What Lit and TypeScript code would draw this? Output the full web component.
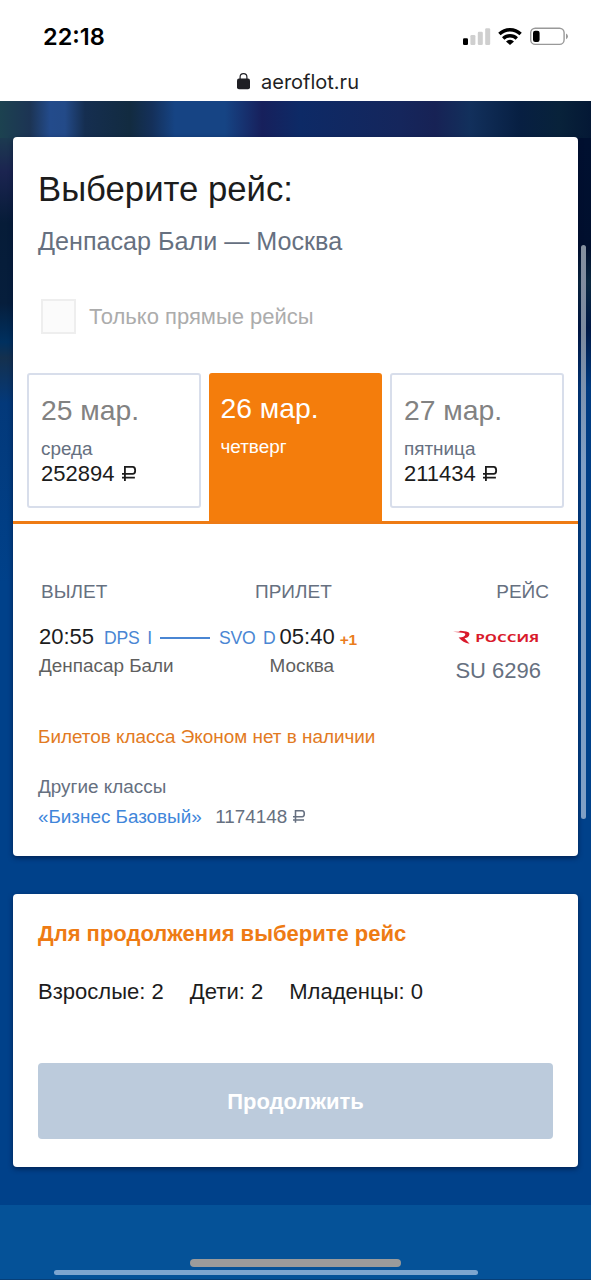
import { LitElement, html, css } from "lit";
import { customElement, property } from "lit/decorators.js";

@customElement("ruble-sign")
class RubleSign extends LitElement {
  static styles = css`
    :host { display: inline-block; width: 0.64em; height: 0.68em; }
    svg { display: block; width: 100%; height: 100%; overflow: visible; }
  `;
  render() {
    return html`<svg viewBox="0 0 14 15" preserveAspectRatio="none" fill="none" stroke="currentColor" stroke-width="1.8">
      <path d="M2.9 15V.9H10.6C12.5.9 13.1 1.8 13.1 4.4S12.5 7.9 10.6 7.9H0M0 11.7H12.8" />
    </svg>`;
  }
}

@customElement("status-bar")
class StatusBar extends LitElement {
  static styles = css`
    :host { display: block; height: 101px; background: #fff; color: #000; }
    .top { display: flex; justify-content: space-between; align-items: flex-start; height: 68px; padding: 23px 23px 0 43px; box-sizing: border-box; }
    .time { font: 600 23.5px/28px Inter, sans-serif; }
    .icons { display: block; margin-top: 4px; }
    .url { display: flex; justify-content: center; align-items: flex-start; gap: 11px; height: 33px; padding-left: 5px; font: 400 20px/26px Inter, sans-serif; color: #1f1f24; }
    .url span { margin-top: 1px; }
    .lock { display: block; margin-top: 5px; }
  `;
  render() {
    return html`
      <div class="top">
        <span class="time">22:18</span>
        <svg class="icons" width="106" height="20" viewBox="462 27 106 20">
          <rect x="463" y="38.2" width="5" height="6.8" rx="1.2" />
          <g fill="#cfcfcf">
            <rect x="470.4" y="35" width="5" height="10" rx="1.2" />
            <rect x="477.8" y="31.8" width="5" height="13.2" rx="1.2" />
            <rect x="485.2" y="28.2" width="5" height="16.8" rx="1.2" />
          </g>
          <g fill="none" stroke="#000" stroke-width="3.4">
            <path d="M499.4 34a15.2 15.2 0 0 1 21.2 0" />
            <path d="M503.2 38.5a9.8 9.8 0 0 1 13.6 0" />
          </g>
          <path d="M506 41.4a6 6 0 0 1 8 0L510 45Z" />
          <rect x="530.7" y="28.2" width="33.4" height="16.2" rx="4.6" fill="#fff" stroke="#999" stroke-width="1.4" />
          <rect x="533" y="30.8" width="6.6" height="11.2" rx="2.2" />
          <path d="M566 33.6q2 1 2 2.8t-2 2.8Z" fill="#999" />
        </svg>
      </div>
      <div class="url">
        <svg class="lock" width="13" height="17" viewBox="0 0 13 17">
          <rect y="5.6" width="13" height="10.6" rx="2" fill="#1f1f24" />
          <path d="M3.1 7V4.1a3.4 3.4 0 0 1 6.8 0V7" fill="none" stroke="#1f1f24" stroke-width="1.2" />
        </svg>
        <span>aeroflot.ru</span>
      </div>`;
  }
}

@customElement("date-tab")
class DateTab extends LitElement {
  @property() date = "";
  @property() day = "";
  @property() price = "";
  @property({ type: Boolean, reflect: true }) active = false;
  static styles = css`
    :host { display: block; box-sizing: border-box; width: 173.5px; height: 135px; padding: 19px 12px 0; border: 2px solid #d8deeb; border-radius: 3px; background: #fff; color: #1c1c1c; }
    :host([active]) { height: 148px; border: 0; background: #f47d0c; border-radius: 3px 3px 0 0; padding: 19px 12px 0; }
    .date { font-size: 28.3px; line-height: 32px; color: #828282; }
    .day { margin-top: 12px; font-size: 18.9px; line-height: 22px; color: #667080; }
    .price { display: flex; align-items: baseline; gap: 7.5px; font-size: 22px; line-height: 28px; white-space: nowrap; }
    :host([active]) .date, :host([active]) .day { color: #fff; }
  `;
  render() {
    return html`
      <div class="date">${this.date}</div>
      <div class="day">${this.day}</div>
      ${this.price ? html`<div class="price">${this.price}<ruble-sign></ruble-sign></div>` : ""}`;
  }
}

@customElement("app-root")
class AppRoot extends LitElement {
  static styles = css`
    :host { display: block; position: relative; width: 591px; height: 1280px; overflow: hidden; font-family: "Liberation Sans", Arial, sans-serif; }
    .page { height: 1179px; box-sizing: border-box; padding: 36px 13px 0; background:
      linear-gradient(90deg, #1c4250 0, #1c3454 30px, #234b8b 50px, #234a88 65px, #152e50 85px, #122b40 130px, #14305a 152px, #164484 175px, #164484 225px, #17205c 262px, #0d2a66 300px, #15265c 400px, #172255 435px, #12305c 470px, #071f42 520px, #08223a 560px, #041835 591px) 0 0 / 100% 37px no-repeat,
      linear-gradient(180deg, #1c3a50 0, #1b2450 34px, #061c38 85px, #061e3c 165px, #00305f 204px, #14304e 220px, #03397a 265px, #00418a 445px) 0 37px / 50% 500px no-repeat,
      linear-gradient(180deg, #001030 0, #000f2e 110px, #0a2840 145px, #001846 190px, #003a80 250px, #00418a 400px) 100% 37px / 50% 500px no-repeat,
      #00418a; }
    .card { background: #fff; border-radius: 4px; box-shadow: 0 2px 5px rgba(0, 15, 50, .6); }
    .flights { height: 719px; }
    .head { height: 236px; box-sizing: border-box; padding: 31px 25px 0; }
    h1 { margin: 0; font-size: 34.7px; line-height: 42px; font-weight: 400; color: #1c1c1c; }
    .route { margin-top: 16px; font-size: 25.15px; line-height: 30px; color: #667080; }
    .direct { display: flex; align-items: center; gap: 13px; margin-top: 43px; padding-left: 3px; color: #acacac; font-size: 22px; line-height: 34px; }
    .box { box-sizing: border-box; width: 35px; height: 35px; border: 2px solid #eee; background: #fbfbfb; }
    .tabs { display: flex; gap: 8px; height: 151px; box-sizing: border-box; padding-left: 14px; border-bottom: 3px solid #ee7b14; }
    .labels { display: flex; padding: 57px 29px 0 28px; font-size: 19px; line-height: 22px; color: #667080; }
    .labels .a { width: 214px; }
    .labels .b { flex: 1; }
    .leg { display: flex; margin-top: 20px; padding: 0 37px 0 26px; justify-content: space-between; height: 60px; }
    .times { display: flex; align-items: baseline; height: 28px; line-height: 28px; white-space: nowrap; }
    .time { font-size: 22px; color: #1c1c1c; }
    .code { box-sizing: border-box; font-size: 17.6px; letter-spacing: -.25px; word-spacing: 3px; color: #4a86d3; }
    .dep { width: 66px; padding-left: 10px; }
    .line { align-self: center; width: 50px; height: 2px; margin-top: 2px; background: #4a86d3; }
    .arr { width: 69.5px; padding-left: 9px; }
    .plus { position: relative; top: 1px; margin-left: 5px; font-size: 15.5px; font-weight: 700; letter-spacing: -.3px; color: #ea7d1c; }
    .cities { display: flex; margin-top: 4px; font-size: 18.9px; line-height: 22px; color: #5f5f5f; }
    .cities .a { width: 230.5px; }
    .air { display: flex; flex-direction: column; align-items: flex-end; }
    .logo { display: block; flex: none; margin: 7px 1px 0 0; }
    .brand { font: 700 10.4px "Open Sans", sans-serif; }
    .num { margin-top: 13px; font-size: 22px; line-height: 28px; color: #667080; }
    .none { margin: 43px 0 0 25px; font-size: 18.9px; line-height: 22px; color: #e27a22; }
    .other { margin: 28px 0 0 25px; font-size: 18.9px; line-height: 22px; color: #667080; }
    .fare { margin: 8px 0 0 25px; font-size: 18.85px; line-height: 22px; color: #667080; display: flex; align-items: baseline; }
    .fare .name { color: #3f86da; margin-right: 13.5px; }
    .fare ruble-sign { margin-left: 6px; }
    .next { margin-top: 38px; height: 273px; box-sizing: border-box; padding: 27px 25px 0; }
    .ask { font-size: 22px; line-height: 26px; font-weight: 700; color: #ee7b14; }
    .pax { display: flex; gap: 26px; margin-top: 32px; font-size: 22.05px; line-height: 26px; color: #1c1c1c; }
    .go { display: block; width: 515px; height: 76px; margin-top: 58px; padding: 2px 0 0; border: 0; border-radius: 4px; background: #bccbdc; color: #fff; font: 700 22px "Liberation Sans", Arial, sans-serif; }
    .foot { position: absolute; left: 0; right: 0; top: 1205px; bottom: 0; background: #055298; border-bottom: 1px solid #073f78; box-sizing: border-box; }
    .home { position: absolute; left: 190px; top: 1259px; width: 211px; height: 8px; border-radius: 4px; background: #9b9b9b; }
    .hscroll { position: absolute; left: 54px; top: 1270px; width: 424px; height: 5px; border-radius: 3px; background: #7ea6d0; }
    .vscroll { position: absolute; left: 581px; top: 245px; width: 5px; height: 574px; border-radius: 3px; background: linear-gradient(180deg, #84909f 0, #7c8aa0 90px, #7f9fc5 220px); }
  `;
  render() {
    return html`
      <status-bar></status-bar>
      <main class="page">
        <section class="card flights">
          <div class="head">
            <h1>Выберите рейс:</h1>
            <div class="route">Денпасар Бали — Москва</div>
            <div class="direct"><span class="box"></span><span>Только прямые рейсы</span></div>
          </div>
          <div class="tabs">
            <date-tab date="25 мар." day="среда" price="252894"></date-tab>
            <date-tab date="26 мар." day="четверг" active></date-tab>
            <date-tab date="27 мар." day="пятница" price="211434"></date-tab>
          </div>
          <div class="labels"><span class="a">ВЫЛЕТ</span><span class="b">ПРИЛЕТ</span><span>РЕЙС</span></div>
          <div class="leg">
            <div>
              <div class="times">
                <span class="time">20:55</span><span class="code dep">DPS I</span><span class="line"></span>
                <span class="code arr">SVO D</span><span class="time">05:40</span><span class="plus">+1</span>
              </div>
              <div class="cities"><span class="a">Денпасар Бали</span><span>Москва</span></div>
            </div>
            <div class="air">
              <svg class="logo" width="87" height="14" viewBox="453 630 87 14" fill="#d9192b">
                <path d="M453 631.7H458.6L460.5 630.8 466.2 631.5Q469.8 632.2 469.4 634.4 469 637.2 464.5 638.3L469.6 643.8Q463 642.8 458.6 637.6 464.8 637 465.3 634.7 465.4 633 461.8 632.8Z" />
                <text class="brand" x="475.2" y="641.8" textLength="64" lengthAdjust="spacingAndGlyphs">РОССИЯ</text>
              </svg>
              <div class="num">SU 6296</div>
            </div>
          </div>
          <div class="none">Билетов класса Эконом нет в наличии</div>
          <div class="other">Другие классы</div>
          <div class="fare"><span class="name">«Бизнес Базовый»</span><span>1174148</span><ruble-sign></ruble-sign></div>
        </section>
        <section class="card next">
          <div class="ask">Для продолжения выберите рейс</div>
          <div class="pax"><span>Взрослые: 2</span><span>Дети: 2</span><span>Младенцы: 0</span></div>
          <button class="go">Продолжить</button>
        </section>
      </main>
      <div class="foot"></div>
      <div class="home"></div>
      <div class="hscroll"></div>
      <div class="vscroll"></div>`;
  }
}
